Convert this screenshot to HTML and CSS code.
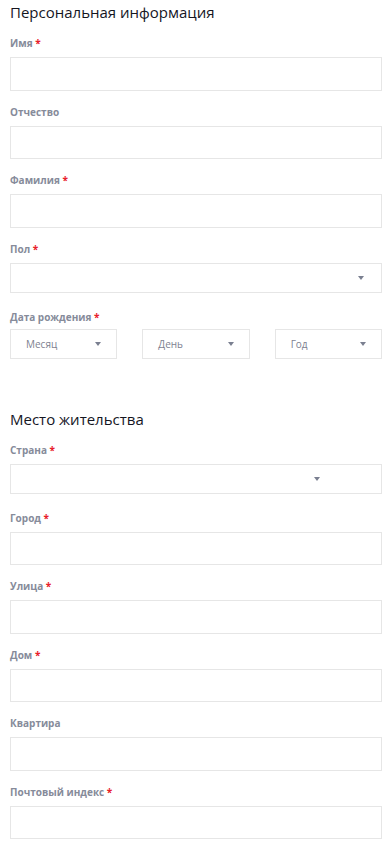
FILE: index.html
```html
<!DOCTYPE html>
<html lang="ru">
<head>
    <meta charset="UTF-8">
    <meta name="viewport" content="width=device-width, initial-scale=1.0">
    <title>Анкета</title>
    <link rel="stylesheet" href="styles.css">
</head>
<body>
    <form class="form">
        <section class="section">
            <h2>Персональная информация</h2>
            <div class="field">
                <label>Имя <span class="req">*</span></label>
                <input type="text" class="input">
            </div>
            <div class="field">
                <label>Отчество</label>
                <input type="text" class="input">
            </div>
            <div class="field">
                <label>Фамилия <span class="req">*</span></label>
                <input type="text" class="input">
            </div>
            <div class="field field-sel">
                <label>Пол <span class="req">*</span></label>
                <div class="select"><span class="arrow"></span></div>
            </div>
            <div class="field field-date">
                <label>Дата рождения <span class="req">*</span></label>
                <div class="date-row">
                    <div class="select small"><span class="val">Месяц</span><span class="arrow"></span></div>
                    <div class="select small"><span class="val">День</span><span class="arrow"></span></div>
                    <div class="select small"><span class="val">Год</span><span class="arrow"></span></div>
                </div>
            </div>
        </section>

        <section class="section second">
            <h2>Место жительства</h2>
            <div class="field field-sel">
                <label>Страна <span class="req">*</span></label>
                <div class="select country"><span class="arrow"></span></div>
            </div>
            <div class="field">
                <label>Город <span class="req">*</span></label>
                <input type="text" class="input">
            </div>
            <div class="field">
                <label>Улица <span class="req">*</span></label>
                <input type="text" class="input">
            </div>
            <div class="field">
                <label>Дом <span class="req">*</span></label>
                <input type="text" class="input">
            </div>
            <div class="field">
                <label>Квартира</label>
                <input type="text" class="input">
            </div>
            <div class="field">
                <label>Почтовый индекс <span class="req">*</span></label>
                <input type="text" class="input">
            </div>
        </section>
    </form>
</body>
</html>
```

FILE: styles.css
```css
* {
    margin: 0;
    padding: 0;
    box-sizing: border-box;
}
body {
    background-color: white;
    font-family: "Open Sans", "Noto Sans", sans-serif;
}
.form {
    padding: 2px 10px 0 10px;
}
.section h2 {
    font-size: 15px;
    line-height: 20px;
    font-weight: 500;
    color: #15161f;
    margin-bottom: 14px;
}
.second {
    margin-top: 50px;
}
.field {
    display: flex;
    flex-direction: column;
    margin-bottom: 14px;
}
.field-sel {
    margin-bottom: 17px;
}
.field label {
    font-size: 10px;
    line-height: 14px;
    font-weight: 700;
    color: #868b9a;
    margin-bottom: 7px;
}
.field-date label {
    margin-bottom: 5px;
}
.req {
    color: #e8202a;
}
.input {
    height: 33.5px;
    border: 1px solid #e6e6e6;
    background: white;
    outline: none;
}
.select {
    height: 30px;
    border: 1px solid #e6e6e6;
    display: flex;
    align-items: center;
    justify-content: flex-end;
    padding-right: 17px;
}
.select.country {
    padding-right: 61px;
}
.date-row {
    display: grid;
    grid-template-columns: repeat(3, 1fr);
    gap: 25px;
}
.select.small {
    justify-content: space-between;
    padding-left: 15px;
    padding-right: 15px;
}
.val {
    font-size: 10px;
    color: #7d8190;
}
.arrow {
    width: 0;
    height: 0;
    border-left: 3px solid transparent;
    border-right: 3px solid transparent;
    border-top: 4px solid #7a7f90;
}
```
